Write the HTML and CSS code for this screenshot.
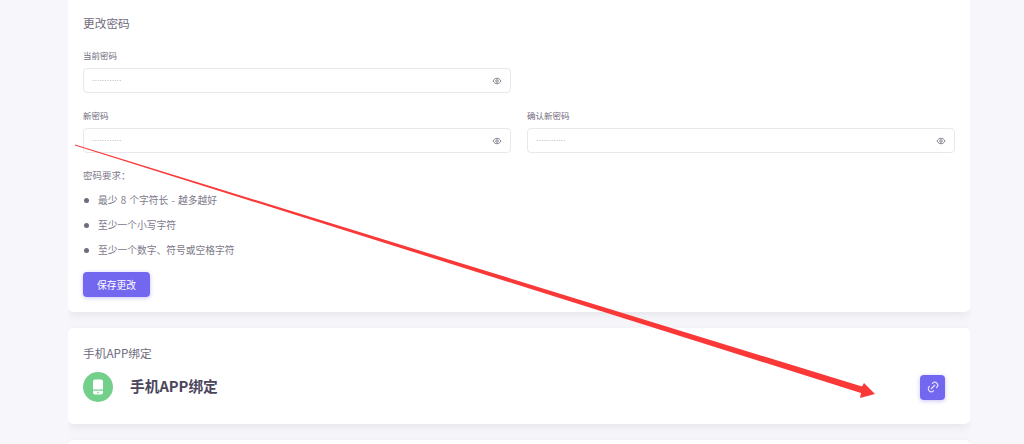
FILE: index.html
```html
<!DOCTYPE html>
<html lang="zh-CN">
<head>
    <meta charset="UTF-8">
    <title>账户安全</title>
    <link rel="stylesheet" href="styles.css">
</head>
<body>
    <div class="page">
        <!-- 更改密码 -->
        <section class="card card-password">
            <h2 class="card-title">更改密码</h2>
            <div class="form-row row-current">
                <div class="field">
                    <label class="field-label">当前密码</label>
                    <div class="input-box">
                        <span class="dots">············</span>
                        <svg class="eye" viewBox="0 0 24 24"><path d="M2.5 12C5 7.5 8.2 5.5 12 5.5s7 2 9.5 6.5c-2.5 4.5-5.7 6.5-9.5 6.5S5 16.5 2.5 12z"/><circle cx="12" cy="12" r="3"/></svg>
                    </div>
                </div>
                <div class="field"></div>
            </div>
            <div class="form-row row-new">
                <div class="field">
                    <label class="field-label">新密码</label>
                    <div class="input-box">
                        <span class="dots">············</span>
                        <svg class="eye" viewBox="0 0 24 24"><path d="M2.5 12C5 7.5 8.2 5.5 12 5.5s7 2 9.5 6.5c-2.5 4.5-5.7 6.5-9.5 6.5S5 16.5 2.5 12z"/><circle cx="12" cy="12" r="3"/></svg>
                    </div>
                </div>
                <div class="field">
                    <label class="field-label">确认新密码</label>
                    <div class="input-box">
                        <span class="dots">············</span>
                        <svg class="eye" viewBox="0 0 24 24"><path d="M2.5 12C5 7.5 8.2 5.5 12 5.5s7 2 9.5 6.5c-2.5 4.5-5.7 6.5-9.5 6.5S5 16.5 2.5 12z"/><circle cx="12" cy="12" r="3"/></svg>
                    </div>
                </div>
            </div>
            <p class="req-title">密码要求：</p>
            <ul class="req-list">
                <li>最少 8 个字符长 - 越多越好</li>
                <li>至少一个小写字符</li>
                <li>至少一个数字、符号或空格字符</li>
            </ul>
            <button class="btn-save" type="button">保存更改</button>
        </section>

        <!-- 手机APP绑定 -->
        <section class="card card-app">
            <h2 class="card-title">手机APP绑定</h2>
            <div class="app-row">
                <span class="app-icon">
                    <svg viewBox="0 0 24 24"><path d="M8.5 3h7A2.5 2.5 0 0 1 18 5.5V15H6V5.5A2.5 2.5 0 0 1 8.5 3z"/><path fill-rule="evenodd" d="M6 16.5h12v2A2.5 2.5 0 0 1 15.5 21h-7A2.5 2.5 0 0 1 6 18.5zM12 17.7a1 1 0 1 0 0 2 1 1 0 0 0 0-2z"/></svg>
                </span>
                <span class="app-name">手机APP绑定</span>
                <button class="btn-link" type="button">
                    <svg viewBox="0 0 24 24"><path d="M9 15l6-6"/><path d="M11 6l.463-.536a5 5 0 0 1 7.071 7.072l-.534.464"/><path d="M13 18l-.397.534a5.068 5.068 0 0 1-7.127 0 4.972 4.972 0 0 1 0-7.071l.524-.463"/></svg>
                </button>
            </div>
        </section>

        <section class="card card-next"></section>
    </div>

    <!-- 截图上的红色标注箭头 -->
    <svg class="arrow" viewBox="0 0 1024 444">
        <polygon points="75,144.6 862,386.5 864,383 875,394 860,398 861,393 75,145.4"/>
    </svg>
</body>
</html>
```

FILE: styles.css
```css
* {
    box-sizing: border-box;
}

html, body {
    height: 444px;
    margin: 0;
    overflow: hidden;
}

body {
    position: relative;
    font-family: "Noto Sans CJK SC", "Liberation Sans", sans-serif;
    background-color: #f7f7fb;
    color: #6f6b7d;
}

.page {
    display: flex;
    flex-direction: column;
    gap: 16px;
    width: 902px;
    height: 444px;
    overflow: hidden;
    margin: 0 0 0 68px;
}

.card {
    flex: none;
    background: #fff;
    border-radius: 5px;
    box-shadow: 0 3px 10px rgba(75, 70, 92, 0.1);
    padding: 0 15px;
}

.card-password {
    height: 312px;
    border-radius: 0 0 5px 5px;
    padding-top: 15px;
}

.card-app {
    height: 96px;
    padding-top: 17px;
}

.card-next {
    height: 60px;
}

.card-title {
    margin: 0;
    font-size: 11.7px;
    line-height: 16px;
    font-weight: 400;
    color: #6f6b7d;
}

.form-row {
    display: grid;
    grid-template-columns: 428px 428px;
    gap: 16px;
}

.row-current {
    margin-top: 18px;
}

.row-new {
    margin-top: 16px;
}

.field-label {
    display: block;
    font-size: 8.5px;
    line-height: 12px;
    color: #6f6b7d;
    margin-bottom: 7px;
}

.input-box {
    display: flex;
    align-items: center;
    justify-content: space-between;
    height: 25px;
    padding: 0 8px;
    border: 1px solid #e8e7ec;
    border-radius: 4px;
    background: #fff;
}

.dots {
    font-family: "Liberation Sans", sans-serif;
    font-size: 7.4px;
    color: #8f8c99;
}

.eye {
    width: 10px;
    height: 10px;
    fill: none;
    stroke: #6f6b7d;
    stroke-width: 2;
}

.req-title {
    margin: 15px 0 0;
    font-size: 9.5px;
    line-height: 14px;
    color: #7d7989;
}

.req-list {
    list-style: none;
    margin: 11px 0 0;
    padding: 0;
}

.req-list li {
    display: flex;
    align-items: center;
    height: 14px;
    margin-bottom: 11px;
    font-size: 9.75px;
    line-height: 14px;
    word-spacing: 1px;
    color: #7d7989;
}

.req-list li:last-child {
    margin-bottom: 0;
}

.req-list li::before {
    content: "";
    flex: none;
    width: 5px;
    height: 5px;
    margin: 0 9px 0 1px;
    border-radius: 50%;
    background: #6f6b7d;
}

.btn-save {
    display: block;
    width: 67px;
    height: 25px;
    margin-top: 15px;
    padding: 0;
    border: none;
    border-radius: 4px;
    background-color: #7367f0;
    box-shadow: 0 1px 4px rgba(115, 103, 240, 0.4);
    color: #fff;
    font-family: inherit;
    font-size: 9.75px;
}

.app-row {
    display: flex;
    align-items: center;
    margin-top: 11px;
    height: 30px;
}

.app-icon {
    display: flex;
    align-items: center;
    justify-content: center;
    flex: none;
    width: 30px;
    height: 30px;
    border-radius: 50%;
    background: #73d08a;
}

.app-icon svg {
    width: 20px;
    height: 20px;
    fill: #fff;
}

.app-name {
    margin-left: 17px;
    font-size: 14.7px;
    line-height: 28px;
    margin-bottom: 2px;
    font-weight: 700;
    color: #4b465c;
}

.btn-link {
    display: flex;
    align-items: center;
    justify-content: center;
    width: 25px;
    height: 25px;
    margin-left: auto;
    margin-right: 10px;
    padding: 0;
    border: none;
    border-radius: 4px;
    background-color: #7367f0;
    box-shadow: 0 1px 4px rgba(115, 103, 240, 0.4);
}

.btn-link svg {
    width: 14px;
    height: 14px;
    fill: none;
    stroke: #e4e1fc;
    stroke-width: 2;
    stroke-linecap: round;
    stroke-linejoin: round;
}

/* 标注箭头盖在内容上面 */
.arrow {
    position: absolute;
    left: 0;
    top: 0;
    width: 1024px;
    height: 444px;
    pointer-events: none;
}

.arrow polygon {
    fill: #fb3838;
}
```
